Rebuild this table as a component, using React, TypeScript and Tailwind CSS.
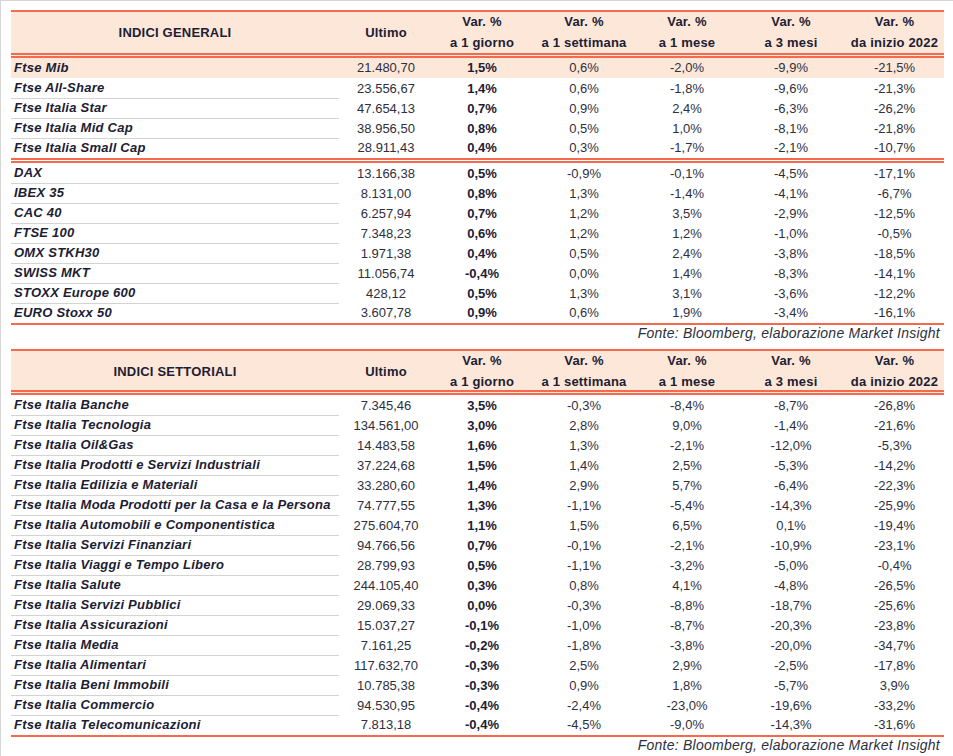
import React from "react";

type Row = [string, string, string, string, string, string, string];

const generali1: Row[] = [
  ["Ftse Mib", "21.480,70", "1,5%", "0,6%", "-2,0%", "-9,9%", "-21,5%"],
  ["Ftse All-Share", "23.556,67", "1,4%", "0,6%", "-1,8%", "-9,6%", "-21,3%"],
  ["Ftse Italia Star", "47.654,13", "0,7%", "0,9%", "2,4%", "-6,3%", "-26,2%"],
  ["Ftse Italia Mid Cap", "38.956,50", "0,8%", "0,5%", "1,0%", "-8,1%", "-21,8%"],
  ["Ftse Italia Small Cap", "28.911,43", "0,4%", "0,3%", "-1,7%", "-2,1%", "-10,7%"],
];

const generali2: Row[] = [
  ["DAX", "13.166,38", "0,5%", "-0,9%", "-0,1%", "-4,5%", "-17,1%"],
  ["IBEX 35", "8.131,00", "0,8%", "1,3%", "-1,4%", "-4,1%", "-6,7%"],
  ["CAC 40", "6.257,94", "0,7%", "1,2%", "3,5%", "-2,9%", "-12,5%"],
  ["FTSE 100", "7.348,23", "0,6%", "1,2%", "1,2%", "-1,0%", "-0,5%"],
  ["OMX STKH30", "1.971,38", "0,4%", "0,5%", "2,4%", "-3,8%", "-18,5%"],
  ["SWISS MKT", "11.056,74", "-0,4%", "0,0%", "1,4%", "-8,3%", "-14,1%"],
  ["STOXX Europe 600", "428,12", "0,5%", "1,3%", "3,1%", "-3,6%", "-12,2%"],
  ["EURO Stoxx 50", "3.607,78", "0,9%", "0,6%", "1,9%", "-3,4%", "-16,1%"],
];

const settoriali: Row[] = [
  ["Ftse Italia Banche", "7.345,46", "3,5%", "-0,3%", "-8,4%", "-8,7%", "-26,8%"],
  ["Ftse Italia Tecnologia", "134.561,00", "3,0%", "2,8%", "9,0%", "-1,4%", "-21,6%"],
  ["Ftse Italia Oil&Gas", "14.483,58", "1,6%", "1,3%", "-2,1%", "-12,0%", "-5,3%"],
  ["Ftse Italia Prodotti e Servizi Industriali", "37.224,68", "1,5%", "1,4%", "2,5%", "-5,3%", "-14,2%"],
  ["Ftse Italia Edilizia e Materiali", "33.280,60", "1,4%", "2,9%", "5,7%", "-6,4%", "-22,3%"],
  ["Ftse Italia Moda Prodotti per la Casa e la Persona", "74.777,55", "1,3%", "-1,1%", "-5,4%", "-14,3%", "-25,9%"],
  ["Ftse Italia Automobili e Componentistica", "275.604,70", "1,1%", "1,5%", "6,5%", "0,1%", "-19,4%"],
  ["Ftse Italia Servizi Finanziari", "94.766,56", "0,7%", "-0,1%", "-2,1%", "-10,9%", "-23,1%"],
  ["Ftse Italia Viaggi e Tempo Libero", "28.799,93", "0,5%", "-1,1%", "-3,2%", "-5,0%", "-0,4%"],
  ["Ftse Italia Salute", "244.105,40", "0,3%", "0,8%", "4,1%", "-4,8%", "-26,5%"],
  ["Ftse Italia Servizi Pubblici", "29.069,33", "0,0%", "-0,3%", "-8,8%", "-18,7%", "-25,6%"],
  ["Ftse Italia Assicurazioni", "15.037,27", "-0,1%", "-1,0%", "-8,7%", "-20,3%", "-23,8%"],
  ["Ftse Italia Media", "7.161,25", "-0,2%", "-1,8%", "-3,8%", "-20,0%", "-34,7%"],
  ["Ftse Italia Alimentari", "117.632,70", "-0,3%", "2,5%", "2,9%", "-2,5%", "-17,8%"],
  ["Ftse Italia Beni Immobili", "10.785,38", "-0,3%", "0,9%", "1,8%", "-5,7%", "3,9%"],
  ["Ftse Italia Commercio", "94.530,95", "-0,4%", "-2,4%", "-23,0%", "-19,6%", "-33,2%"],
  ["Ftse Italia Telecomunicazioni", "7.813,18", "-0,4%", "-4,5%", "-9,0%", "-14,3%", "-31,6%"],
];

const GRID = "grid grid-cols-[328px_94px_98px_106px_100px_108px_99px]";

function Header({ title, h }: { title: string; h: string }) {
  const cols: [string, string][] = [
    ["Var. %", "a 1 giorno"],
    ["Var. %", "a 1 settimana"],
    ["Var. %", "a 1 mese"],
    ["Var. %", "a 3 mesi"],
    ["Var. %", "da inizio 2022"],
  ];
  return (
    <div className={`${GRID} ${h} bg-[#fce7d9] border-t-2 border-[#f26a4f] border-b-[5px] border-b-[#f26a4f] border-double box-content font-bold text-[13px] tracking-[0.2px] text-[#1c2033]`}>
      <div className="flex items-center justify-center">{title}</div>
      <div className="flex items-center justify-center">Ultimo</div>
      {cols.map(([a, b], i) => (
        <div key={i} className="flex flex-col items-center justify-center leading-[20.5px]">
          <span>{a}</span>
          <span>{b}</span>
        </div>
      ))}
    </div>
  );
}

function DataRow({ r, sep, hl }: { r: Row; sep: boolean; hl?: boolean }) {
  return (
    <div className={`${GRID} h-5 text-[13px] ${hl ? "bg-[#fce7d9]" : ""}`}>
      <div className={`pl-[3px] flex items-center font-bold italic tracking-[0.25px] text-[#1c2033] ${sep ? "border-b border-[#d3d3d3]" : ""}`}>
        {r[0]}
      </div>
      <div className="flex items-center justify-center text-[#2e2f3d]">{r[1]}</div>
      <div className="flex items-center justify-center font-bold text-[#1c2033]">{r[2]}</div>
      <div className="flex items-center justify-center text-[#2e2f3d]">{r[3]}</div>
      <div className="flex items-center justify-center text-[#2e2f3d]">{r[4]}</div>
      <div className="flex items-center justify-center text-[#2e2f3d]">{r[5]}</div>
      <div className="flex items-center justify-center text-[#2e2f3d]">{r[6]}</div>
    </div>
  );
}

function Fonte() {
  return (
    <div className="h-[17px] leading-[17px] text-right pr-[4px] italic text-[14px] tracking-[0.25px] text-[#2e2f3d]">
      Fonte: Bloomberg, elaborazione Market Insight
    </div>
  );
}

export default function App() {
  return (
    <div
      className="w-[953px] h-[756px] bg-white border-t border-l border-[#d6d6d6] overflow-hidden"
      style={{ fontFamily: '"Liberation Sans", Arial, sans-serif' }}
    >
      <div className="ml-[10px] mt-[9px] w-[933px]">
        <Header title="INDICI GENERALI" h="h-[41px]" />
        {generali1.map((r, i) => (
          <DataRow key={r[0]} r={r} sep={i > 0 && i < generali1.length - 1} hl={i === 0} />
        ))}
        <div className="h-[5px] border-t-[5px] border-double border-[#f26a4f]" />
        {generali2.map((r, i) => (
          <DataRow key={r[0]} r={r} sep={i < generali2.length - 1} />
        ))}
        <div className="h-[2px] bg-[#f26a4f]" />
        <Fonte />
        <div className="mt-[7px]">
          <Header title="INDICI SETTORIALI" h="h-[39px]" />
        </div>
        {settoriali.map((r, i) => (
          <DataRow key={r[0]} r={r} sep={i < settoriali.length - 1} />
        ))}
        <div className="h-[2px] bg-[#f26a4f]" />
        <Fonte />
      </div>
    </div>
  );
}
